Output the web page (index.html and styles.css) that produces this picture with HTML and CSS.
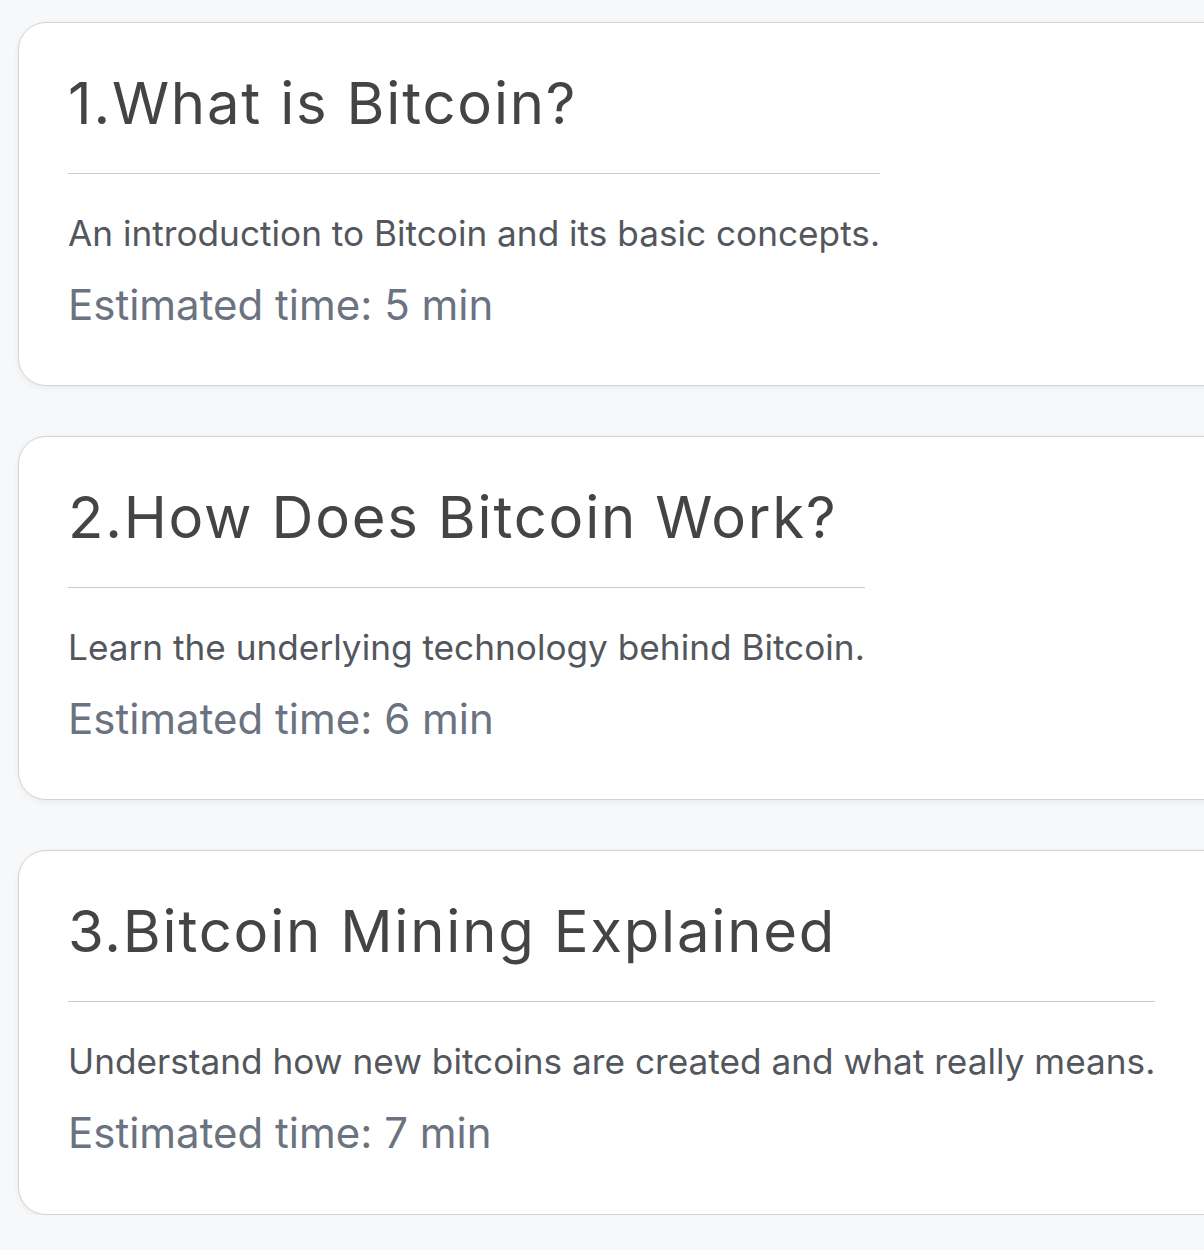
FILE: index.html
```html
<!DOCTYPE html>
<html lang="en">
<head>
<meta charset="utf-8">
<title>Bitcoin lessons</title>
<link rel="stylesheet" href="styles.css">
</head>
<body>
<main class="list">
  <article class="card">
    <div class="content">
      <h2 class="title">1.What is Bitcoin?</h2>
      <hr class="rule">
      <p class="desc">An introduction to Bitcoin and its basic concepts.</p>
      <p class="time">Estimated time: 5 min</p>
    </div>
  </article>
  <article class="card">
    <div class="content">
      <h2 class="title">2.How Does Bitcoin Work?</h2>
      <hr class="rule">
      <p class="desc">Learn the underlying technology behind Bitcoin.</p>
      <p class="time">Estimated time: 6 min</p>
    </div>
  </article>
  <article class="card">
    <div class="content">
      <h2 class="title">3.Bitcoin Mining Explained</h2>
      <hr class="rule">
      <p class="desc">Understand how new bitcoins are created and what really means.</p>
      <p class="time">Estimated time: 7 min</p>
    </div>
  </article>
</main>
</body>
</html>
```
FILE: styles.css
```css
html, body {
  margin: 0;
  padding: 0;
  background: #f7f8fa;
  overflow: hidden;
}
body {
  font-family: Inter, "Noto Sans", sans-serif;
}
.list {
  display: flex;
  flex-direction: column;
  gap: 50px;
  padding: 22px 0 0 18px;
  width: 1300px;
}
.card {
  background: #ffffff;
  border: 1.5px solid #d3d3d3;
  border-radius: 28px;
  box-shadow: 0 2px 6px rgba(0, 0, 0, 0.06);
  padding: 46px 0 55px 49px;
}
.content {
  display: inline-flex;
  flex-direction: column;
  align-items: stretch;
}
.title {
  margin: 0;
  font-size: 58px;
  font-weight: 400;
  line-height: 1.2;
  letter-spacing: 1.8px;
  color: #444444;
  white-space: nowrap;
}
.rule {
  border: 0;
  border-top: 1.5px solid #cccccc;
  margin: 34px 0 0 0;
  width: 100%;
}
.desc {
  margin: 38px 0 0 0;
  font-size: 35.2px;
  line-height: 1.2;
  color: #53575d;
  white-space: nowrap;
}
.time {
  margin: 26px 0 0 0;
  font-size: 42px;
  line-height: 1.2;
  color: #6b7280;
  white-space: nowrap;
}
```
